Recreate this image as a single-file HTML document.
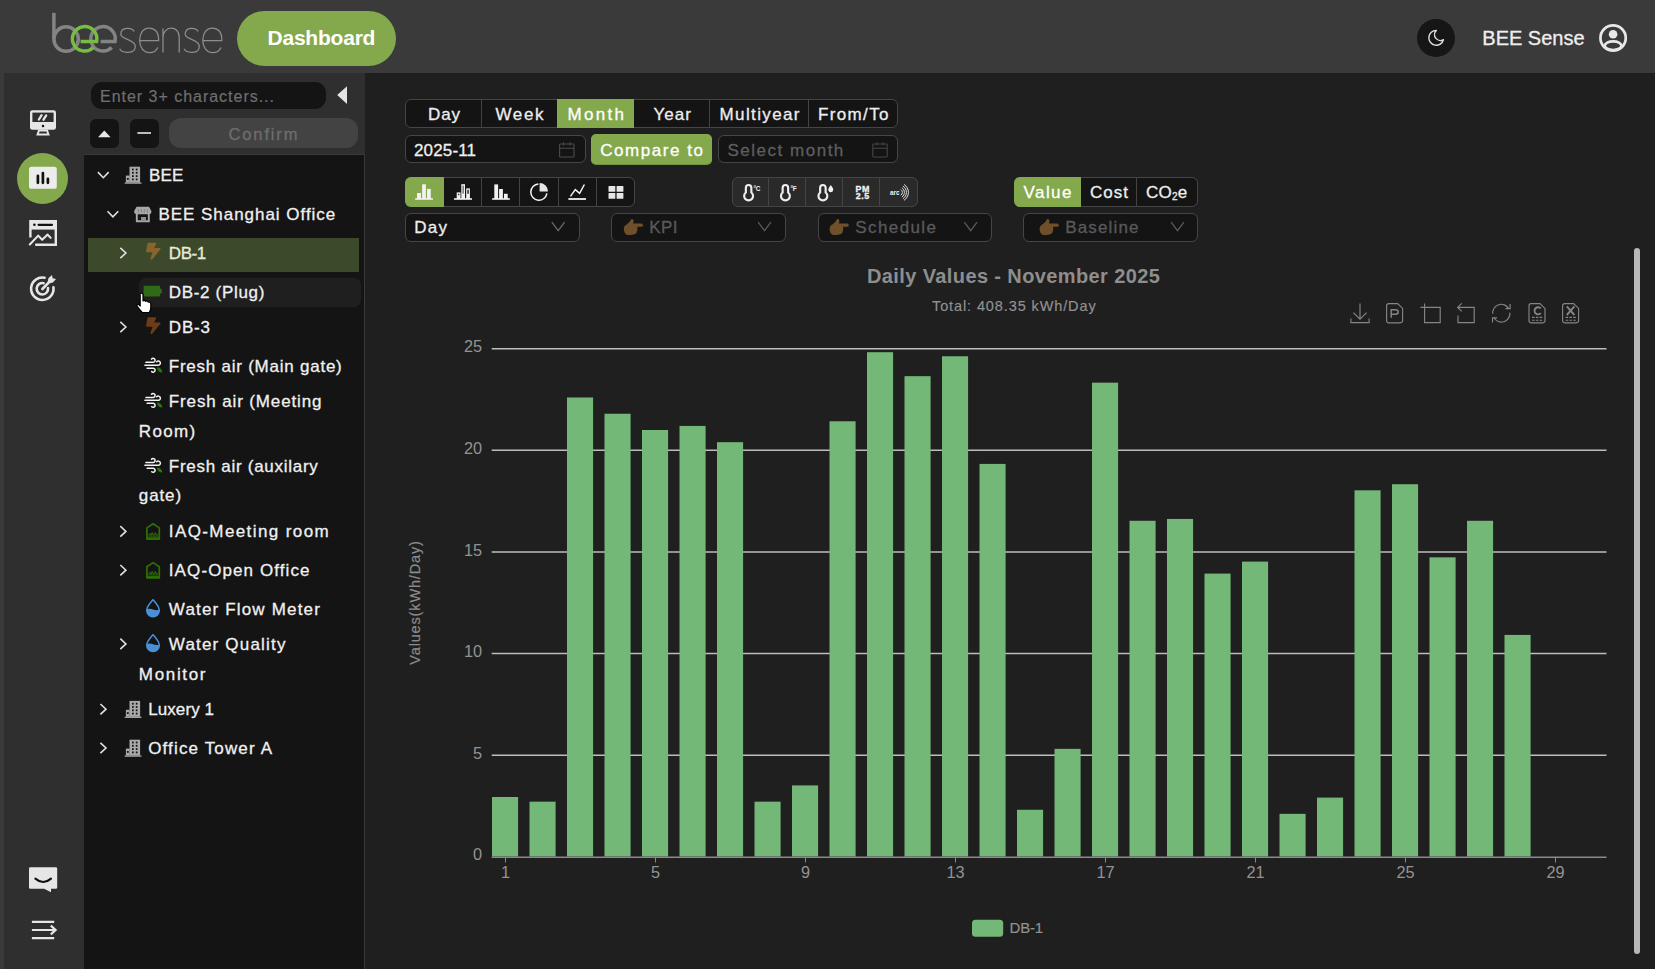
<!DOCTYPE html>
<html><head><meta charset="utf-8"><title>BEE Sense Dashboard</title>
<style>
*{box-sizing:border-box;margin:0;padding:0}
html,body{width:1655px;height:969px;overflow:hidden;background:#1f1f1f;font-family:"Liberation Sans",sans-serif}
#root{position:relative;width:1655px;height:969px;overflow:hidden;background:#1f1f1f}
.a{position:absolute}
.t{position:absolute;white-space:nowrap}
.box{position:absolute;background:#141414;border:1px solid #383838;border-radius:6px}
svg{position:absolute;overflow:visible}
</style></head>
<body><div id="root">
<div class="a" style="left:0px;top:0px;width:1655.0px;height:72.6px;background:#3a3a3a;"></div>
<div class="a" style="left:0px;top:72px;width:3.9px;height:897.0px;background:#3a3a3a;"></div>
<div class="a" style="left:3.9px;top:72.6px;width:80.1px;height:896.4px;background:#2f2f2f;"></div>
<div class="a" style="left:84px;top:72.6px;width:281.3px;height:896.4px;background:#2f2f2f;"></div>
<div class="a" style="left:84px;top:154px;width:281.3px;height:815.0px;background:#3a3a3a;"></div>
<div class="a" style="left:84px;top:155px;width:280.0px;height:814.0px;background:#141414;"></div>
<div class="a" style="left:237px;top:11px;width:159.0px;height:55.0px;background:#84a94d;border-radius:28px"></div>
<div class="a" style="left:1417px;top:19px;width:38.0px;height:38.0px;background:#161616;border-radius:50%"></div>
<div class="a" style="left:90.5px;top:81.6px;width:235.5px;height:27.4px;background:#141414;border-radius:11px"></div>
<div class="a" style="left:90px;top:118.5px;width:28.5px;height:29.0px;background:#141414;border-radius:6px"></div>
<div class="a" style="left:130px;top:118.5px;width:28.5px;height:29.0px;background:#141414;border-radius:6px"></div>
<div class="a" style="left:169px;top:118px;width:189.0px;height:30.0px;background:#434343;border-radius:12px"></div>
<div class="a" style="left:88.3px;top:238.2px;width:270.7px;height:33.5px;background:#3c4a2b;"></div>
<div class="a" style="left:138.8px;top:277.5px;width:222.2px;height:29.3px;background:#1f1f1f;border-radius:7px"></div>
<div class="a" style="left:17px;top:152.5px;width:51.0px;height:51.0px;background:#84a94d;border-radius:50%"></div>
<div class="a" style="left:405px;top:99.3px;width:493.0px;height:29.2px;background:#141414;border:1px solid #464646;border-radius:6px"></div>
<div class="a" style="left:557.2px;top:99.3px;width:76.8px;height:29.2px;background:#84a94d;"></div>
<div class="a" style="left:481.0px;top:100px;width:1.0px;height:28.0px;background:#444;"></div>
<div class="a" style="left:709.0px;top:100px;width:1.0px;height:28.0px;background:#444;"></div>
<div class="a" style="left:808.0px;top:100px;width:1.0px;height:28.0px;background:#444;"></div>
<div class="a" style="left:405px;top:135.3px;width:180.5px;height:28.2px;background:#141414;border:1px solid #464646;border-radius:6px"></div>
<div class="a" style="left:591.3px;top:134px;width:120.7px;height:30.3px;background:#84a94d;border-radius:5px;box-shadow:0 1px 0 #6f9140"></div>
<div class="a" style="left:718px;top:135.3px;width:180.0px;height:28.2px;background:#141414;border:1px solid #464646;border-radius:6px"></div>
<div class="a" style="left:405px;top:177px;width:230.0px;height:30.0px;background:#141414;border:1px solid #464646;border-radius:6px"></div>
<div class="a" style="left:405px;top:177px;width:39.0px;height:30.0px;background:#84a94d;border-radius:6px 0 0 6px"></div>
<div class="a" style="left:481.0px;top:178px;width:1.0px;height:28.0px;background:#444;"></div>
<div class="a" style="left:519.0px;top:178px;width:1.0px;height:28.0px;background:#444;"></div>
<div class="a" style="left:557.5px;top:178px;width:1.0px;height:28.0px;background:#444;"></div>
<div class="a" style="left:596.0px;top:178px;width:1.0px;height:28.0px;background:#444;"></div>
<div class="a" style="left:731.5px;top:177px;width:186.5px;height:30.0px;background:#2a2a2a;border:1px solid #444;border-radius:6px"></div>
<div class="a" style="left:768.0px;top:178px;width:1.0px;height:28.0px;background:#444;"></div>
<div class="a" style="left:805.0px;top:178px;width:1.0px;height:28.0px;background:#444;"></div>
<div class="a" style="left:842.0px;top:178px;width:1.0px;height:28.0px;background:#444;"></div>
<div class="a" style="left:879.0px;top:178px;width:1.0px;height:28.0px;background:#444;"></div>
<div class="a" style="left:1014px;top:177px;width:183.5px;height:30.0px;background:#141414;border:1px solid #464646;border-radius:6px"></div>
<div class="a" style="left:1014px;top:177px;width:67.0px;height:30.0px;background:#84a94d;border-radius:6px 0 0 6px"></div>
<div class="a" style="left:1136px;top:178px;width:1.0px;height:28.0px;background:#444;"></div>
<div class="a" style="left:405px;top:212.5px;width:174.5px;height:29.2px;background:#141414;border:1px solid #464646;border-radius:6px"></div>
<div class="a" style="left:611px;top:212.5px;width:174.5px;height:29.2px;background:#141414;border:1px solid #464646;border-radius:6px"></div>
<div class="a" style="left:817.5px;top:212.5px;width:174.0px;height:29.2px;background:#141414;border:1px solid #464646;border-radius:6px"></div>
<div class="a" style="left:1023px;top:212.5px;width:174.5px;height:29.2px;background:#141414;border:1px solid #464646;border-radius:6px"></div>
<svg class="a" style="left:0;top:0" width="1655" height="969" viewBox="0 0 1655 969">
<line x1="491.7" x2="1606.5" y1="755.17" y2="755.17" stroke="#bdbdbd" stroke-width="1.55"/>
<line x1="491.7" x2="1606.5" y1="653.55" y2="653.55" stroke="#bdbdbd" stroke-width="1.55"/>
<line x1="491.7" x2="1606.5" y1="551.92" y2="551.92" stroke="#bdbdbd" stroke-width="1.55"/>
<line x1="491.7" x2="1606.5" y1="450.30" y2="450.30" stroke="#bdbdbd" stroke-width="1.55"/>
<line x1="491.7" x2="1606.5" y1="348.67" y2="348.67" stroke="#bdbdbd" stroke-width="1.55"/>
<rect x="492.00" y="796.99" width="26.1" height="59.51" fill="#73b877"/>
<rect x="529.50" y="801.66" width="26.1" height="54.84" fill="#73b877"/>
<rect x="567.00" y="397.49" width="26.1" height="459.01" fill="#73b877"/>
<rect x="604.50" y="413.74" width="26.1" height="442.76" fill="#73b877"/>
<rect x="642.00" y="429.99" width="26.1" height="426.51" fill="#73b877"/>
<rect x="679.50" y="425.93" width="26.1" height="430.57" fill="#73b877"/>
<rect x="717.00" y="442.18" width="26.1" height="414.32" fill="#73b877"/>
<rect x="754.50" y="801.66" width="26.1" height="54.84" fill="#73b877"/>
<rect x="792.00" y="785.41" width="26.1" height="71.09" fill="#73b877"/>
<rect x="829.50" y="421.26" width="26.1" height="435.24" fill="#73b877"/>
<rect x="867.00" y="352.20" width="26.1" height="504.30" fill="#73b877"/>
<rect x="904.50" y="376.17" width="26.1" height="480.33" fill="#73b877"/>
<rect x="942.00" y="356.26" width="26.1" height="500.24" fill="#73b877"/>
<rect x="979.50" y="463.91" width="26.1" height="392.59" fill="#73b877"/>
<rect x="1017.00" y="809.79" width="26.1" height="46.71" fill="#73b877"/>
<rect x="1054.50" y="748.86" width="26.1" height="107.64" fill="#73b877"/>
<rect x="1092.00" y="382.67" width="26.1" height="473.83" fill="#73b877"/>
<rect x="1129.50" y="520.78" width="26.1" height="335.72" fill="#73b877"/>
<rect x="1167.00" y="518.95" width="26.1" height="337.55" fill="#73b877"/>
<rect x="1204.50" y="573.58" width="26.1" height="282.92" fill="#73b877"/>
<rect x="1242.00" y="561.60" width="26.1" height="294.90" fill="#73b877"/>
<rect x="1279.50" y="813.85" width="26.1" height="42.65" fill="#73b877"/>
<rect x="1317.00" y="797.60" width="26.1" height="58.90" fill="#73b877"/>
<rect x="1354.50" y="490.31" width="26.1" height="366.19" fill="#73b877"/>
<rect x="1392.00" y="484.22" width="26.1" height="372.28" fill="#73b877"/>
<rect x="1429.50" y="557.33" width="26.1" height="299.17" fill="#73b877"/>
<rect x="1467.00" y="520.78" width="26.1" height="335.72" fill="#73b877"/>
<rect x="1504.50" y="634.92" width="26.1" height="221.58" fill="#73b877"/>
<line x1="491.7" x2="1606.5" y1="857.2" y2="857.2" stroke="#8a8a8a" stroke-width="1.6"/>
<line x1="505.50" x2="505.50" y1="857" y2="862.5" stroke="#8a8a8a" stroke-width="1"/>
<text x="505.50" y="878.0" text-anchor="middle" font-size="16.3" fill="#939393">1</text>
<line x1="655.50" x2="655.50" y1="857" y2="862.5" stroke="#8a8a8a" stroke-width="1"/>
<text x="655.50" y="878.0" text-anchor="middle" font-size="16.3" fill="#939393">5</text>
<line x1="805.50" x2="805.50" y1="857" y2="862.5" stroke="#8a8a8a" stroke-width="1"/>
<text x="805.50" y="878.0" text-anchor="middle" font-size="16.3" fill="#939393">9</text>
<line x1="955.50" x2="955.50" y1="857" y2="862.5" stroke="#8a8a8a" stroke-width="1"/>
<text x="955.50" y="878.0" text-anchor="middle" font-size="16.3" fill="#939393">13</text>
<line x1="1105.50" x2="1105.50" y1="857" y2="862.5" stroke="#8a8a8a" stroke-width="1"/>
<text x="1105.50" y="878.0" text-anchor="middle" font-size="16.3" fill="#939393">17</text>
<line x1="1255.50" x2="1255.50" y1="857" y2="862.5" stroke="#8a8a8a" stroke-width="1"/>
<text x="1255.50" y="878.0" text-anchor="middle" font-size="16.3" fill="#939393">21</text>
<line x1="1405.50" x2="1405.50" y1="857" y2="862.5" stroke="#8a8a8a" stroke-width="1"/>
<text x="1405.50" y="878.0" text-anchor="middle" font-size="16.3" fill="#939393">25</text>
<line x1="1555.50" x2="1555.50" y1="857" y2="862.5" stroke="#8a8a8a" stroke-width="1"/>
<text x="1555.50" y="878.0" text-anchor="middle" font-size="16.3" fill="#939393">29</text>
<text x="482" y="860.40" text-anchor="end" font-size="16.3" fill="#939393">0</text>
<text x="482" y="758.77" text-anchor="end" font-size="16.3" fill="#939393">5</text>
<text x="482" y="657.15" text-anchor="end" font-size="16.3" fill="#939393">10</text>
<text x="482" y="555.52" text-anchor="end" font-size="16.3" fill="#939393">15</text>
<text x="482" y="453.90" text-anchor="end" font-size="16.3" fill="#939393">20</text>
<text x="482" y="352.27" text-anchor="end" font-size="16.3" fill="#939393">25</text>
<text transform="translate(420.3,602.5) rotate(-90)" text-anchor="middle" font-size="14.5" fill="#8c8c8c" stroke="#8c8c8c" stroke-width="0.2" letter-spacing="0.85">Values(kWh/Day)</text>
<rect x="972" y="919.8" width="31.2" height="17" rx="3.5" fill="#73b877"/>
</svg>
<div class="a" style="left:1634px;top:248px;width:6.0px;height:706.0px;background:#b8b8b8;border-radius:3px"></div>
<svg class="a" style="left:0;top:0;" width="1655" height="969" viewBox="0 0 1655 969" fill="none"><path d="M53.9 12.9 V39" stroke="#848484" stroke-width="3.5"/><circle cx="66.1" cy="39.05" r="12.25" stroke="#848484" stroke-width="3.5"/><path d="M100.6 41.4 H115.05 A12.25 12.25 0 1 0 111.72 47.50" stroke="#848484" stroke-width="3.5"/><path d="M80.6 41.4 H96.65 A12.25 12.25 0 1 0 93.32 47.50" stroke="#78bd40" stroke-width="3.5"/><path d="M134.1 31.6 C132.3 27.4 120.8 26.4 120.8 34.2 C120.8 39.6 135.3 39.2 135.3 46.2 C135.3 54.4 122.1 53.4 119.6 48.8" stroke="#8e8e8e" stroke-width="1.25"/><path d="M139.9 40.7 H158.6 C158.9 31.0 154.1 28.0 149.1 28.0 C142.6 28.0 139.6 34.0 139.6 40.3 C139.6 46.6 143.1 52.6 149.6 52.6 C153.6 52.6 156.1 51.1 157.8 47.4" stroke="#8e8e8e" stroke-width="1.25"/><path d="M163.0 28.4 V52.6 M163.0 37.5 C163.0 25.4 179.2 24.8 179.2 37.0 V52.6" stroke="#8e8e8e" stroke-width="1.25"/><path d="M198.1 31.6 C196.3 27.4 185.2 26.4 185.2 34.2 C185.2 39.6 199.3 39.2 199.3 46.2 C199.3 54.4 186.5 53.4 184.0 48.8" stroke="#8e8e8e" stroke-width="1.25"/><path d="M203.1 40.7 H221.8 C222.1 31.0 217.3 28.0 212.3 28.0 C205.8 28.0 202.8 34.0 202.8 40.3 C202.8 46.6 206.3 52.6 212.8 52.6 C216.8 52.6 219.3 51.1 221.0 47.4" stroke="#8e8e8e" stroke-width="1.25"/><path d="M1436.3 30.4 A7.4 7.4 0 1 0 1443.4 39.699999999999996 A5.9 5.9 0 0 1 1436.3 30.4 Z" stroke="#e0e0e0" stroke-width="1.4" stroke-linejoin="round"/><clipPath id="ucl"><circle cx="1613.1" cy="38.0" r="13"/></clipPath><circle cx="1613.1" cy="38.0" r="12.65" stroke="#e8e8e8" stroke-width="2.7"/><circle cx="1613.1" cy="34.3" r="4.3" fill="#e8e8e8"/><ellipse cx="1613.1" cy="45.7" rx="8.3" ry="4.4" stroke="#e8e8e8" stroke-width="2.7" clip-path="url(#ucl)"/><rect x="30" y="110.2" width="26" height="19.6" rx="2.4" fill="#e6e6e6"/><rect x="32.4" y="112.6" width="21.2" height="9.4" fill="#2f2f2f"/><path d="M38.9 119.5 L41.6 115.2 M43.5 119.7 L46.2 115.4" stroke="#e6e6e6" stroke-width="2.3" stroke-linecap="round"/><circle cx="43" cy="126" r="1.25" fill="#111"/><path d="M38.2 129.6 L36.2 135.6 H49.8 L47.8 129.6 Z" fill="#e6e6e6"/><path d="M39.6 131.6 L38.9 133.6 H47.1 L46.4 131.6 Z" fill="#2f2f2f"/><rect x="29" y="166.8" width="27.8" height="22" rx="2.6" fill="#ececec"/><path d="M37.9 175.8 V182.8 M42.9 173 V182.8 M47.9 178.8 V182.8" stroke="#111" stroke-width="2.7" stroke-linecap="round"/><path d="M29.2 220 H57 V229.6 H29.2 Z" fill="#e6e6e6"/><path d="M30.4 229 V237.4 M55.8 229 V244.8 H35.2" stroke="#e6e6e6" stroke-width="2.4"/><circle cx="34.4" cy="224.8" r="1.3" fill="#111"/><path d="M38.6 224.8 H52" stroke="#111" stroke-width="2.2" stroke-linecap="round"/><path d="M29.8 244.4 L38.2 235.6 L42.2 239.8 L47.6 234.6 L50.6 237.8" stroke="#e6e6e6" stroke-width="2.1" stroke-linejoin="round" stroke-linecap="round"/><path d="M44.6 277.8 A11.2 11.2 0 1 0 53.4 287.2" stroke="#e6e6e6" stroke-width="2.6" stroke-linecap="round"/><path d="M43.6 283.2 A5.7 5.7 0 1 0 48.0 288.0" stroke="#e6e6e6" stroke-width="2.6" stroke-linecap="round"/><path d="M42.4 289.0 L50.0 281.2" stroke="#e6e6e6" stroke-width="2.6" stroke-linecap="round"/><path d="M47.6 282.40000000000003 L48.4 278.2 L52.0 275.0 L52.599999999999994 278.2 L56.0 279.0 L52.8 282.6 L48.8 283.40000000000003 Z" fill="#e6e6e6"/><path d="M30.4 867.3 H55.8 Q57.2 867.3 57.2 868.7 V887.4 Q57.2 888.8 55.8 888.8 H51 V892.2 L44.2 888.8 H30.4 Q29 888.8 29 887.4 V868.7 Q29 867.3 30.4 867.3 Z" fill="#e6e6e6"/><path d="M35.4 878.6 Q43.2 885.4 51 878.6" stroke="#111" stroke-width="2.1" stroke-linecap="round"/><path d="M31.9 921.9 H54.2 M31.9 930 H55 M31.9 938.1 H54.2 M50.8 925.6 L55.6 930 L50.8 934.4" stroke="#e6e6e6" stroke-width="2.2"/><path d="M347 86.2 V104 L337.2 95.1 Z" fill="#e4e4e4"/><path d="M98 137.2 H110.6 L104.3 130.4 Z" fill="#e8e8e8"/><path d="M137.4 133 H151" stroke="#e8e8e8" stroke-width="1.6"/><path d="M97.9 172.1 L103.3 177.7 L108.7 172.1" stroke="#e0e0e0" stroke-width="1.6"/><path d="M129.5 166.7 H140.1 V182.6 H129.5 Z" fill="#a9a9a9"/><path d="M125.9 175.6 H129.7 V182.6 H125.9 Z" fill="#a9a9a9"/><path d="M124.7 183.1 H141.5" stroke="#a9a9a9" stroke-width="1.3"/><rect x="132.0" y="168.6" width="1.7" height="1.8" fill="#141414"/><rect x="135.8" y="168.6" width="1.7" height="1.8" fill="#141414"/><rect x="132.0" y="171.9" width="1.7" height="1.8" fill="#141414"/><rect x="135.8" y="171.9" width="1.7" height="1.8" fill="#141414"/><rect x="132.0" y="175.2" width="1.7" height="1.8" fill="#141414"/><rect x="135.8" y="175.2" width="1.7" height="1.8" fill="#141414"/><rect x="132.0" y="178.5" width="1.7" height="1.8" fill="#141414"/><rect x="135.8" y="178.5" width="1.7" height="1.8" fill="#141414"/><rect x="126.9" y="178" width="1.8" height="1.8" fill="#141414"/><path d="M107.5 211.2 L112.9 216.8 L118.3 211.2" stroke="#e0e0e0" stroke-width="1.6"/><path d="M136.6 206.8 H149 L151.4 211.0 Q151.6 214.20000000000002 148.8 214.20000000000002 H136.8 Q134 214.20000000000002 134.2 211.0 Z" fill="#a8a8a8"/><path d="M136.8 213.8 V221.20000000000002 H148.8 V213.8" stroke="#a8a8a8" stroke-width="1.9"/><rect x="141" y="217.0" width="5" height="4.2" fill="#8e8e8e"/><path d="M138.4 209.20000000000002 V212.6" stroke="#777" stroke-width="0.8"/><path d="M141.35 209.20000000000002 V212.6" stroke="#777" stroke-width="0.8"/><path d="M144.3 209.20000000000002 V212.6" stroke="#777" stroke-width="0.8"/><path d="M147.25 209.20000000000002 V212.6" stroke="#777" stroke-width="0.8"/><path d="M120.3 247.8 L125.9 253.0 L120.3 258.2" stroke="#e0e0e0" stroke-width="1.6"/><path transform="translate(146,242.8) scale(0.0456,0.0328)" d="M296 160H180.600l42.600-129.800C227.200 15 215.700 0 200 0H56C44 0 33.800 8.900 32.200 20.800l-32 240C-1.700 275.200 9.500 288 24 288h118.700L96.600 482.500c-3.600 15.200 8 29.500 23.300 29.500 8.400 0 16.400-4.400 20.800-12l176-304c9.300-15.900-2.200-36-20.700-36z" fill="#8a642b"/><rect x="143.6" y="285.8" width="16.6" height="10.6" rx="1.3" fill="#2f6b17"/><rect x="159.79999999999998" y="288.7" width="2" height="4.8" rx="0.6" fill="#2f6b17"/><path d="M120.3 321.8 L125.9 327.0 L120.3 332.2" stroke="#e0e0e0" stroke-width="1.6"/><path transform="translate(146,317.2) scale(0.0456,0.0328)" d="M296 160H180.600l42.600-129.800C227.200 15 215.700 0 200 0H56C44 0 33.800 8.900 32.200 20.800l-32 240C-1.700 275.200 9.500 288 24 288h118.700L96.600 482.500c-3.600 15.200 8 29.500 23.300 29.500 8.400 0 16.400-4.400 20.800-12l176-304c9.300-15.900-2.200-36-20.700-36z" fill="#6e3b17"/><path d="M145.9 362.29999999999995 H153.3 A2 2 0 1 0 151.5 359.09999999999997" stroke="#f4f4f4" stroke-width="1.5" stroke-linecap="round"/><path d="M144.9 365.2 H158.3 A2.1 2.1 0 1 0 156.70000000000002 361.7" stroke="#f4f4f4" stroke-width="1.5" stroke-linecap="round"/><path d="M147.10000000000002 368.2 H153.3 A2 2 0 1 1 151.70000000000002 371.59999999999997" stroke="#f4f4f4" stroke-width="1.5" stroke-linecap="round"/><path d="M156.9 367.29999999999995 Q161.9 367.5 162.3 372.5 Q157.9 372.5 156.9 367.29999999999995 Z" fill="#2a7a08"/><path d="M145.9 397.4 H153.3 A2 2 0 1 0 151.5 394.2" stroke="#f4f4f4" stroke-width="1.5" stroke-linecap="round"/><path d="M144.9 400.3 H158.3 A2.1 2.1 0 1 0 156.70000000000002 396.8" stroke="#f4f4f4" stroke-width="1.5" stroke-linecap="round"/><path d="M147.10000000000002 403.3 H153.3 A2 2 0 1 1 151.70000000000002 406.7" stroke="#f4f4f4" stroke-width="1.5" stroke-linecap="round"/><path d="M156.9 402.4 Q161.9 402.6 162.3 407.6 Q157.9 407.6 156.9 402.4 Z" fill="#2a7a08"/><path d="M145.9 462.4 H153.3 A2 2 0 1 0 151.5 459.2" stroke="#f4f4f4" stroke-width="1.5" stroke-linecap="round"/><path d="M144.9 465.3 H158.3 A2.1 2.1 0 1 0 156.70000000000002 461.8" stroke="#f4f4f4" stroke-width="1.5" stroke-linecap="round"/><path d="M147.10000000000002 468.3 H153.3 A2 2 0 1 1 151.70000000000002 471.7" stroke="#f4f4f4" stroke-width="1.5" stroke-linecap="round"/><path d="M156.9 467.4 Q161.9 467.6 162.3 472.6 Q157.9 472.6 156.9 467.4 Z" fill="#2a7a08"/><path d="M120.3 526.2 L125.9 531.4 L120.3 536.6" stroke="#e0e0e0" stroke-width="1.6"/><path d="M146.9 538.9 V527.9 L153.1 523.8 L159.3 527.9 V538.9 Z" stroke="#2f6f05" stroke-width="1.7" stroke-linejoin="round"/><path d="M146.5 538.5 H159.8" stroke="#2f6f05" stroke-width="2.4"/><path d="M148.4 535.5 L150 533.3 L151.4 535.3 L152.2 532.5 L153.6 535.3 L155.4 532.6999999999999 L156.2 535.1 L157.8 534.3 M148.2 536.1 H158" stroke="#2f6f05" stroke-width="1"/><path d="M120.3 565.0 L125.9 570.2 L120.3 575.4" stroke="#e0e0e0" stroke-width="1.6"/><path d="M146.9 577.7 V566.7 L153.1 562.6 L159.3 566.7 V577.7 Z" stroke="#2f6f05" stroke-width="1.7" stroke-linejoin="round"/><path d="M146.5 577.3000000000001 H159.8" stroke="#2f6f05" stroke-width="2.4"/><path d="M148.4 574.3000000000001 L150 572.1 L151.4 574.1 L152.2 571.3000000000001 L153.6 574.1 L155.4 571.5 L156.2 573.9000000000001 L157.8 573.1 M148.2 574.9000000000001 H158" stroke="#2f6f05" stroke-width="1"/><path d="M153.0 599.6999999999999 C151.0 602.1999999999999 146.70000000000002 606.4 146.70000000000002 610.4 A6.3 6.3 0 0 0 159.3 610.4 C159.3 606.4 155.0 602.1999999999999 153.0 599.6999999999999 Z" stroke="#4a90d9" stroke-width="1.5" stroke-linejoin="round"/><path d="M146.70000000000002 609.0 Q150.20000000000002 608.1999999999999 153.8 609.6999999999999 Q156.8 610.6999999999999 159.3 609.5999999999999 V610.4 A6.3 6.3 0 0 1 146.70000000000002 610.4 Z" fill="#4a90d9"/><path d="M120.3 638.7 L125.9 643.9 L120.3 649.1" stroke="#e0e0e0" stroke-width="1.6"/><path d="M153.0 634.6 C151.0 637.1 146.70000000000002 641.3000000000001 146.70000000000002 645.3000000000001 A6.3 6.3 0 0 0 159.3 645.3000000000001 C159.3 641.3000000000001 155.0 637.1 153.0 634.6 Z" stroke="#4a90d9" stroke-width="1.5" stroke-linejoin="round"/><path d="M146.70000000000002 643.9000000000001 Q150.20000000000002 643.1 153.8 644.6 Q156.8 645.6 159.3 644.5 V645.3000000000001 A6.3 6.3 0 0 1 146.70000000000002 645.3000000000001 Z" fill="#4a90d9"/><path d="M100.4 704.0 L106.0 709.2 L100.4 714.4" stroke="#e0e0e0" stroke-width="1.6"/><path d="M129.5 700.9000000000001 H140.1 V716.8000000000001 H129.5 Z" fill="#a9a9a9"/><path d="M125.9 709.8000000000001 H129.7 V716.8000000000001 H125.9 Z" fill="#a9a9a9"/><path d="M124.7 717.3000000000001 H141.5" stroke="#a9a9a9" stroke-width="1.3"/><rect x="132.0" y="702.8000000000001" width="1.7" height="1.8" fill="#141414"/><rect x="135.8" y="702.8000000000001" width="1.7" height="1.8" fill="#141414"/><rect x="132.0" y="706.1" width="1.7" height="1.8" fill="#141414"/><rect x="135.8" y="706.1" width="1.7" height="1.8" fill="#141414"/><rect x="132.0" y="709.4000000000001" width="1.7" height="1.8" fill="#141414"/><rect x="135.8" y="709.4000000000001" width="1.7" height="1.8" fill="#141414"/><rect x="132.0" y="712.7" width="1.7" height="1.8" fill="#141414"/><rect x="135.8" y="712.7" width="1.7" height="1.8" fill="#141414"/><rect x="126.9" y="712.2" width="1.8" height="1.8" fill="#141414"/><path d="M100.4 742.8 L106.0 748.0 L100.4 753.2" stroke="#e0e0e0" stroke-width="1.6"/><path d="M129.5 739.7 H140.1 V755.6 H129.5 Z" fill="#a9a9a9"/><path d="M125.9 748.6 H129.7 V755.6 H125.9 Z" fill="#a9a9a9"/><path d="M124.7 756.1 H141.5" stroke="#a9a9a9" stroke-width="1.3"/><rect x="132.0" y="741.6" width="1.7" height="1.8" fill="#141414"/><rect x="135.8" y="741.6" width="1.7" height="1.8" fill="#141414"/><rect x="132.0" y="744.9" width="1.7" height="1.8" fill="#141414"/><rect x="135.8" y="744.9" width="1.7" height="1.8" fill="#141414"/><rect x="132.0" y="748.2" width="1.7" height="1.8" fill="#141414"/><rect x="135.8" y="748.2" width="1.7" height="1.8" fill="#141414"/><rect x="132.0" y="751.5" width="1.7" height="1.8" fill="#141414"/><rect x="135.8" y="751.5" width="1.7" height="1.8" fill="#141414"/><rect x="126.9" y="751" width="1.8" height="1.8" fill="#141414"/></svg>
<svg class="a" style="left:0;top:0;" width="1655" height="969" viewBox="0 0 1655 969" fill="none"><rect x="559.6" y="144.0" width="14.4" height="13" rx="0.8" stroke="#4c4c4c" stroke-width="1.1"/><path d="M559.6 148.20000000000002 H574.0 M563.5 142.20000000000002 V145.4 M570.1 142.20000000000002 V145.4" stroke="#4c4c4c" stroke-width="1.1"/><rect x="872.8" y="144.0" width="14.4" height="13" rx="0.8" stroke="#444" stroke-width="1.1"/><path d="M872.8 148.20000000000002 H887.1999999999999 M876.6999999999999 142.20000000000002 V145.4 M883.3 142.20000000000002 V145.4" stroke="#444" stroke-width="1.1"/><path d="M415.2 199 H432.9" stroke="#f2f2f2" stroke-width="1.6"/><rect x="417" y="193" width="4" height="6" fill="#f2f2f2"/><rect x="422.1" y="184.3" width="3.8" height="14.7" fill="#f2f2f2"/><rect x="427" y="188.9" width="3.8" height="10.1" fill="#f2f2f2"/><path d="M454 199 H472" stroke="#f2f2f2" stroke-width="1.6"/><rect x="456.7" y="192.4" width="3.8" height="6.6" fill="#f2f2f2"/><rect x="461.3" y="184.2" width="3.7" height="14.8" fill="#f2f2f2"/><rect x="466.2" y="188.4" width="3.7" height="10.6" fill="#f2f2f2"/><rect x="462.4" y="185.6" width="1.5" height="8" fill="#777"/><rect x="467.3" y="189.8" width="1.5" height="4" fill="#333"/><rect x="457.9" y="193.8" width="1.4" height="1.4" fill="#333"/><path d="M492.1 199 H509.9" stroke="#f2f2f2" stroke-width="1.6"/><rect x="494.3" y="184.4" width="3.8" height="14.6" fill="#f2f2f2"/><rect x="499.1" y="189" width="3.8" height="10" fill="#f2f2f2"/><rect x="504" y="193.8" width="3.7" height="5.2" fill="#f2f2f2"/><path d="M538.4 184 A8.1 8.1 0 1 0 546.9 193.4" stroke="#f2f2f2" stroke-width="1.5"/><path d="M539.6 191.4 V183 A8.4 8.4 0 0 1 548 191.4 Z" fill="#e6e6e6"/><path d="M568.4 199 H586" stroke="#f2f2f2" stroke-width="1.8"/><path d="M570.4 196.4 L575.3 189.6 L579.6 193.4 L584.4 184.5" stroke="#f2f2f2" stroke-width="1.5"/><rect x="608.5" y="186" width="6.8" height="5.8" rx="0.5" fill="#e6e6e6"/><rect x="616.6" y="186" width="6.8" height="5.8" rx="0.5" fill="#e6e6e6"/><rect x="608.5" y="193" width="6.8" height="5.8" rx="0.5" fill="#e6e6e6"/><rect x="616.6" y="193" width="6.8" height="5.8" rx="0.5" fill="#e6e6e6"/><path d="M745.85 192.50 V187.75 A2.75 2.75 0 0 1 751.35 187.75 V192.50 A4.45 4.45 0 1 1 745.85 192.50 Z" stroke="#eeeeee" stroke-width="2.15"/><path d="M782.65 192.50 V187.75 A2.75 2.75 0 0 1 788.15 187.75 V192.50 A4.45 4.45 0 1 1 782.65 192.50 Z" stroke="#eeeeee" stroke-width="2.15"/><path d="M820.15 192.50 V187.75 A2.75 2.75 0 0 1 825.65 187.75 V192.50 A4.45 4.45 0 1 1 820.15 192.50 Z" stroke="#eeeeee" stroke-width="2.15"/><text x="753.6" y="190.8" font-size="6.4" font-weight="700" fill="#f2f2f2" letter-spacing="-0.3">°C</text><text x="790.6" y="190.8" font-size="6.4" font-weight="700" fill="#f2f2f2" letter-spacing="-0.3">°F</text><path d="M830.8 185 Q833.6 188.6 833.2 190.2 A2.5 2.5 0 0 1 828.3 190.2 Q828 188.6 830.8 185 Z" fill="#f2f2f2"/><text x="862.7" y="191.6" text-anchor="middle" font-size="8.9" font-weight="700" fill="#f2f2f2" stroke="#f2f2f2" stroke-width="0.3" letter-spacing="0.5">PM</text><text x="862.7" y="199.4" text-anchor="middle" font-size="8.9" font-weight="700" fill="#f2f2f2" stroke="#f2f2f2" stroke-width="0.3" letter-spacing="0.5">2.5</text><text x="890" y="194.6" font-size="6.4" font-weight="700" fill="#f2f2f2">arc</text><path d="M900.80 189.52 A3.4 3.4 0 0 1 900.80 195.28" stroke="#f2f2f2" stroke-width="0.9"/><path d="M901.86 187.82 A5.4 5.4 0 0 1 901.86 196.98" stroke="#f2f2f2" stroke-width="0.9"/><path d="M902.92 186.12 A7.4 7.4 0 0 1 902.92 198.68" stroke="#f2f2f2" stroke-width="0.9"/><path d="M903.98 184.43 A9.4 9.4 0 0 1 903.98 200.37" stroke="#f2f2f2" stroke-width="0.9"/><path d="M551.8 222.2 L558.2 230.6 L564.6 222.2" stroke="#6c6c6c" stroke-width="1.25"/><path d="M758.1 222.2 L764.5 230.6 L770.9 222.2" stroke="#5c5c5c" stroke-width="1.25"/><path d="M964.3 222.2 L970.7 230.6 L977.1 222.2" stroke="#5c5c5c" stroke-width="1.25"/><path d="M1171.1 222.2 L1177.5 230.6 L1183.9 222.2" stroke="#5c5c5c" stroke-width="1.25"/><path d="M631.5 219.0 Q633.5 218.6 633.6 221.0 L633.2 223.6 H641.4 Q643.0 223.8 643.0 225.2 Q643.0 226.8 641.4 226.8 H637.0 Q638.2 228.0 637.2 229.2 Q638.0 230.6 636.8 231.6 Q637.0 233.6 635.2 234.0 Q632.0 235.4 627.4 235.0 Q624.0 233.4 623.8 229.4 Q623.6 226.0 626.6 224.6 Q629.6 222.6 631.5 219.0 Z" fill="#70502a"/><path d="M837.3 219.0 Q839.3 218.6 839.4 221.0 L839.0 223.6 H847.2 Q848.8 223.8 848.8 225.2 Q848.8 226.8 847.2 226.8 H842.8 Q844.0 228.0 843.0 229.2 Q843.8 230.6 842.6 231.6 Q842.8 233.6 841.0 234.0 Q837.8 235.4 833.2 235.0 Q829.8 233.4 829.6 229.4 Q829.4 226.0 832.4 224.6 Q835.4 222.6 837.3 219.0 Z" fill="#70502a"/><path d="M1047.3 219.0 Q1049.3 218.6 1049.4 221.0 L1049.0 223.6 H1057.2 Q1058.8 223.8 1058.8 225.2 Q1058.8 226.8 1057.2 226.8 H1052.8 Q1054.0 228.0 1053.0 229.2 Q1053.8 230.6 1052.6 231.6 Q1052.8 233.6 1051.0 234.0 Q1047.8 235.4 1043.2 235.0 Q1039.8 233.4 1039.6 229.4 Q1039.4 226.0 1042.4 224.6 Q1045.4 222.6 1047.3 219.0 Z" fill="#70502a"/><text x="1146" y="198.2" font-size="17" fill="#eee" stroke="#eee" stroke-width="0.3" letter-spacing="0.2">CO<tspan font-size="10" dy="2.2">2</tspan><tspan dy="-2.2">e</tspan></text><path d="M1360 303.4 V319 M1353.4 312.6 L1360 319.2 L1366.6 312.6 M1350.9 318.4 V322.6 H1369.1 V318.4" stroke="#858585" stroke-width="1.15"/><path d="M1388.6000000000001 303.6 H1397.6000000000001 L1402.6000000000001 308.4 V320.6 Q1402.6000000000001 322.8 1400.4 322.8 H1388.6000000000001 Q1386.6000000000001 322.8 1386.6000000000001 320.6 V305.8 Q1386.6000000000001 303.6 1388.6000000000001 303.6 Z" stroke="#858585" stroke-width="1.15"/><path d="M1391.2 317.8 V309.8 H1395.6 Q1398.2 309.8 1398.2 312 Q1398.2 314.2 1395.6 314.2 H1391.2" stroke="#858585" stroke-width="1.5"/><path d="M1424.6 303.6 V322.6 H1440.2 V307.4 H1420.4" stroke="#858585" stroke-width="1.15"/><path d="M1458 315.6 V322.6 H1474.2 V307.4 H1457.8 M1461.8 303.4 L1457.6 307.4 L1461.8 311.4" stroke="#858585" stroke-width="1.15"/><path d="M1492.7 313.8 A8.6 8.6 0 0 1 1508.7 308.59999999999997 M1509.8999999999999 312.59999999999997 A8.6 8.6 0 0 1 1493.8999999999999 317.8" stroke="#858585" stroke-width="1.15"/><path d="M1505.5 308.59999999999997 H1510.1 V304.0 M1497.1 317.8 H1492.5 V322.4" stroke="#858585" stroke-width="1.15"/><path d="M1531.0 303.6 H1540.0 L1545.0 308.4 V320.6 Q1545.0 322.8 1542.8 322.8 H1531.0 Q1529.0 322.8 1529.0 320.6 V305.8 Q1529.0 303.6 1531.0 303.6 Z" stroke="#858585" stroke-width="1.15"/><path d="M1540.8 308.4 A3.6 3.6 0 1 0 1540.8 313.2" stroke="#858585" stroke-width="1.9"/><path d="M1532.0 317.4 H1542.1999999999998" stroke="#858585" stroke-width="1.1" stroke-dasharray="2.6 1.2"/><path d="M1532.0 320.2 H1542.1999999999998" stroke="#858585" stroke-width="1.1" stroke-dasharray="2.6 1.2"/><path d="M1564.6000000000001 303.6 H1573.6000000000001 L1578.6000000000001 308.4 V320.6 Q1578.6000000000001 322.8 1576.4 322.8 H1564.6000000000001 Q1562.6000000000001 322.8 1562.6000000000001 320.6 V305.8 Q1562.6000000000001 303.6 1564.6000000000001 303.6 Z" stroke="#858585" stroke-width="1.15"/><path d="M1566.8 306.4 L1574.4 315 M1574.4 306.4 L1566.8 315" stroke="#858585" stroke-width="1.9"/><path d="M1565.6000000000001 317.4 H1575.8" stroke="#858585" stroke-width="1.1" stroke-dasharray="2.6 1.2"/><path d="M1565.6000000000001 320.2 H1575.8" stroke="#858585" stroke-width="1.1" stroke-dasharray="2.6 1.2"/></svg>
<svg class="a" style="left:0;top:0;" width="1655" height="969" viewBox="0 0 1655 969" fill="none"><path d="M140.39999999999998 293.3 Q142.79999999999998 292.9 143.0 294.9 V300.9 Q144.39999999999998 299.7 145.6 301.3 Q147.2 300.3 148.2 302.09999999999997 Q150.6 301.5 150.79999999999998 303.9 V307.7 Q150.6 310.7 149.2 312.5 H142.2 Q139.79999999999998 309.7 137.0 306.09999999999997 Q136.6 304.09999999999997 138.79999999999998 304.5 L140.2 306.09999999999997 V294.9 Q139.79999999999998 293.5 140.39999999999998 293.3 Z" fill="#fff" stroke="#000" stroke-width="1.2" stroke-linejoin="round"/></svg>
<div class="t" style="left:267.5px;top:24.1px;font-size:21px;line-height:27px;font-weight:700;color:#fff;letter-spacing:-0.22px;-webkit-text-stroke:0px #fff;">Dashboard</div>
<div class="t" style="left:1482.3px;top:25.0px;font-size:20px;line-height:26px;font-weight:400;color:#eee;letter-spacing:0.00px;-webkit-text-stroke:0.3px #eee;">BEE Sense</div>
<div class="t" style="left:100.0px;top:85.6px;font-size:16px;line-height:21px;font-weight:400;color:#6f6f6f;letter-spacing:0.98px;-webkit-text-stroke:0.2px #6f6f6f;">Enter 3+ characters...</div>
<div class="t" style="left:228.5px;top:124.0px;font-size:16.5px;line-height:21px;font-weight:400;color:#6e6e6e;letter-spacing:1.87px;-webkit-text-stroke:0.3px #6e6e6e;">Confirm</div>
<div class="t" style="left:148.9px;top:165.0px;font-size:17px;line-height:22px;font-weight:400;color:#f0f0f0;letter-spacing:0.18px;-webkit-text-stroke:0.3px #f0f0f0;">BEE</div>
<div class="t" style="left:158.4px;top:204.0px;font-size:17px;line-height:22px;font-weight:400;color:#f0f0f0;letter-spacing:0.97px;-webkit-text-stroke:0.3px #f0f0f0;">BEE Shanghai Office</div>
<div class="t" style="left:168.8px;top:243.0px;font-size:17px;line-height:22px;font-weight:400;color:#e8ecd8;letter-spacing:-0.41px;-webkit-text-stroke:0.3px #e8ecd8;">DB-1</div>
<div class="t" style="left:168.8px;top:282.0px;font-size:17px;line-height:22px;font-weight:400;color:#f0f0f0;letter-spacing:0.67px;-webkit-text-stroke:0.3px #f0f0f0;">DB-2 (Plug)</div>
<div class="t" style="left:168.8px;top:317.0px;font-size:17px;line-height:22px;font-weight:400;color:#f0f0f0;letter-spacing:0.82px;-webkit-text-stroke:0.3px #f0f0f0;">DB-3</div>
<div class="t" style="left:168.8px;top:356.2px;font-size:17px;line-height:22px;font-weight:400;color:#f0f0f0;letter-spacing:0.76px;-webkit-text-stroke:0.3px #f0f0f0;">Fresh air (Main gate)</div>
<div class="t" style="left:168.8px;top:391.3px;font-size:17px;line-height:22px;font-weight:400;color:#f0f0f0;letter-spacing:0.87px;-webkit-text-stroke:0.3px #f0f0f0;">Fresh air (Meeting</div>
<div class="t" style="left:138.8px;top:421.0px;font-size:17px;line-height:22px;font-weight:400;color:#f0f0f0;letter-spacing:1.35px;-webkit-text-stroke:0.3px #f0f0f0;">Room)</div>
<div class="t" style="left:168.8px;top:456.3px;font-size:17px;line-height:22px;font-weight:400;color:#f0f0f0;letter-spacing:0.72px;-webkit-text-stroke:0.3px #f0f0f0;">Fresh air (auxilary</div>
<div class="t" style="left:138.8px;top:484.5px;font-size:17px;line-height:22px;font-weight:400;color:#f0f0f0;letter-spacing:0.89px;-webkit-text-stroke:0.3px #f0f0f0;">gate)</div>
<div class="t" style="left:168.8px;top:521.4px;font-size:17px;line-height:22px;font-weight:400;color:#f0f0f0;letter-spacing:1.40px;-webkit-text-stroke:0.3px #f0f0f0;">IAQ-Meeting room</div>
<div class="t" style="left:168.8px;top:560.2px;font-size:17px;line-height:22px;font-weight:400;color:#f0f0f0;letter-spacing:1.10px;-webkit-text-stroke:0.3px #f0f0f0;">IAQ-Open Office</div>
<div class="t" style="left:168.8px;top:599.0px;font-size:17px;line-height:22px;font-weight:400;color:#f0f0f0;letter-spacing:1.17px;-webkit-text-stroke:0.3px #f0f0f0;">Water Flow Meter</div>
<div class="t" style="left:168.8px;top:633.9px;font-size:17px;line-height:22px;font-weight:400;color:#f0f0f0;letter-spacing:1.19px;-webkit-text-stroke:0.3px #f0f0f0;">Water Quality</div>
<div class="t" style="left:138.8px;top:664.0px;font-size:17px;line-height:22px;font-weight:400;color:#f0f0f0;letter-spacing:1.67px;-webkit-text-stroke:0.3px #f0f0f0;">Monitor</div>
<div class="t" style="left:148.2px;top:699.2px;font-size:17px;line-height:22px;font-weight:400;color:#f0f0f0;letter-spacing:0.09px;-webkit-text-stroke:0.3px #f0f0f0;">Luxery 1</div>
<div class="t" style="left:148.2px;top:738.0px;font-size:17px;line-height:22px;font-weight:400;color:#f0f0f0;letter-spacing:1.14px;-webkit-text-stroke:0.3px #f0f0f0;">Office Tower A</div>
<div class="t" style="left:428.0px;top:104.0px;font-size:17px;line-height:22px;font-weight:400;color:#eee;letter-spacing:0.88px;-webkit-text-stroke:0.3px #eee;">Day</div>
<div class="t" style="left:495.5px;top:104.0px;font-size:17px;line-height:22px;font-weight:400;color:#eee;letter-spacing:1.61px;-webkit-text-stroke:0.3px #eee;">Week</div>
<div class="t" style="left:567.5px;top:104.0px;font-size:17px;line-height:22px;font-weight:400;color:#fff;letter-spacing:2.31px;-webkit-text-stroke:0.3px #fff;">Month</div>
<div class="t" style="left:653.5px;top:104.0px;font-size:17px;line-height:22px;font-weight:400;color:#eee;letter-spacing:1.05px;-webkit-text-stroke:0.3px #eee;">Year</div>
<div class="t" style="left:719.5px;top:104.0px;font-size:17px;line-height:22px;font-weight:400;color:#eee;letter-spacing:1.38px;-webkit-text-stroke:0.3px #eee;">Multiyear</div>
<div class="t" style="left:818.0px;top:104.0px;font-size:17px;line-height:22px;font-weight:400;color:#eee;letter-spacing:1.36px;-webkit-text-stroke:0.3px #eee;">From/To</div>
<div class="t" style="left:414.0px;top:140.0px;font-size:17px;line-height:22px;font-weight:400;color:#eee;letter-spacing:0.14px;-webkit-text-stroke:0.3px #eee;">2025-11</div>
<div class="t" style="left:600.2px;top:140.0px;font-size:17px;line-height:22px;font-weight:400;color:#fff;letter-spacing:1.55px;-webkit-text-stroke:0.3px #fff;">Compare to</div>
<div class="t" style="left:727.5px;top:140.0px;font-size:17px;line-height:22px;font-weight:400;color:#5e5e5e;letter-spacing:1.51px;-webkit-text-stroke:0.3px #5e5e5e;">Select month</div>
<div class="t" style="left:1023.6px;top:182.0px;font-size:17px;line-height:22px;font-weight:400;color:#fff;letter-spacing:1.40px;-webkit-text-stroke:0.3px #fff;">Value</div>
<div class="t" style="left:1090.0px;top:182.0px;font-size:17px;line-height:22px;font-weight:400;color:#eee;letter-spacing:0.98px;-webkit-text-stroke:0.3px #eee;">Cost</div>
<div class="t" style="left:414.3px;top:217.0px;font-size:17px;line-height:22px;font-weight:400;color:#eee;letter-spacing:1.18px;-webkit-text-stroke:0.3px #eee;">Day</div>
<div class="t" style="left:649.2px;top:217.0px;font-size:17px;line-height:22px;font-weight:400;color:#5a5a5a;letter-spacing:0.50px;-webkit-text-stroke:0.3px #5a5a5a;">KPI</div>
<div class="t" style="left:855.3px;top:217.0px;font-size:17px;line-height:22px;font-weight:400;color:#5a5a5a;letter-spacing:1.40px;-webkit-text-stroke:0.3px #5a5a5a;">Schedule</div>
<div class="t" style="left:1065.3px;top:217.0px;font-size:17px;line-height:22px;font-weight:400;color:#5a5a5a;letter-spacing:1.13px;-webkit-text-stroke:0.3px #5a5a5a;">Baseline</div>
<div class="t" style="left:867.0px;top:262.5px;font-size:20px;line-height:26px;font-weight:700;color:#8e8e8e;letter-spacing:0.39px;-webkit-text-stroke:0px #8e8e8e;">Daily Values - November 2025</div>
<div class="t" style="left:932.0px;top:296.9px;font-size:14.5px;line-height:19px;font-weight:400;color:#929292;letter-spacing:0.89px;-webkit-text-stroke:0.15px #929292;">Total: 408.35 kWh/Day</div>
<div class="t" style="left:1009.5px;top:918.0px;font-size:15px;line-height:20px;font-weight:400;color:#929292;letter-spacing:-0.16px;-webkit-text-stroke:0.15px #929292;">DB-1</div>
</div></body></html>
